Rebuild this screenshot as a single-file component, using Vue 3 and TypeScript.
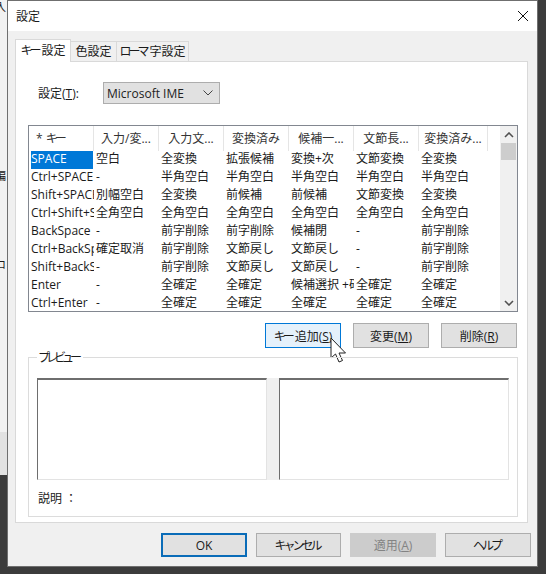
<script setup lang="ts">
const headers: string[] = ['入力/変...', '入力文...', '変換済み', '候補一...', '文節長...', '変換済み...']
const rows: string[][] = [
  ['SPACE', '空白', '全変換', '拡張候補', '変換+次', '文節変換', '全変換'],
  ['Ctrl+SPACE', '-', '半角空白', '半角空白', '半角空白', '半角空白', '半角空白'],
  ['Shift+SPACE', '別幅空白', '全変換', '前候補', '前候補', '文節変換', '全変換'],
  ['Ctrl+Shift+SPACE', '全角空白', '全角空白', '全角空白', '全角空白', '全角空白', '全角空白'],
  ['BackSpace', '-', '前字削除', '前字削除', '候補閉', '-', '前字削除'],
  ['Ctrl+BackSpace', '確定取消', '前字削除', '文節戻し', '文節戻し', '-', '前字削除'],
  ['Shift+BackSpace', '-', '前字削除', '文節戻し', '文節戻し', '-', '前字削除'],
  ['Enter', '-', '全確定', '全確定', '候補選択 +確定', '全確定', '全確定'],
  ['Ctrl+Enter', '-', '全確定', '全確定', '全確定', '全確定', '全確定'],
]
</script>

<template>
  <div class="desktop">
    <div class="behind">
      <span class="hint hint-a">入</span>
      <span class="hint hint-b">編</span>
      <span class="hint hint-c">ロ</span>
      <div class="behind-foot"></div>
    </div>
    <div class="window">
      <header class="titlebar">
        <span class="title">設定</span>
        <svg class="close" width="12" height="12" viewBox="0 0 12 12">
          <path d="M1 1 L11 11 M11 1 L1 11" stroke="#111" stroke-width="1" fill="none" />
        </svg>
      </header>
      <div class="body">
        <nav class="tabs">
          <span class="tab active"><span class="kana">キー</span>設定</span>
          <span class="tab">色設定</span>
          <span class="tab"><span class="kana">ローマ</span>字設定</span>
        </nav>
        <section class="pane">
          <div class="setting">
            <label class="setting-label">設定(<u>T</u>):</label>
            <div class="combo">
              <span>Microsoft IME</span>
              <svg width="10" height="6" viewBox="0 0 10 6">
                <path d="M0.5 0.5 L5 5 L9.5 0.5" stroke="#444" stroke-width="1" fill="none" />
              </svg>
            </div>
          </div>

          <div class="list">
            <div class="table">
              <div class="thead">
                <span class="th th-key">* <span class="kana">キー</span></span>
                <span v-for="(h, i) in headers" :key="i" class="th">{{ h }}</span>
              </div>
              <div v-for="(row, r) in rows" :key="r" class="tr">
                <span
                  v-for="(c, i) in row"
                  :key="i"
                  class="td"
                  :class="{ selected: r === 0 && i === 0 }"
                >{{ c }}</span>
              </div>
            </div>
            <div class="scrollbar">
              <svg width="10" height="6" viewBox="0 0 10 6">
                <path d="M1 5 L5 1 L9 5" stroke="#505050" stroke-width="1.6" fill="none" />
              </svg>
              <div class="thumb"></div>
              <div class="track"></div>
              <svg width="10" height="6" viewBox="0 0 10 6">
                <path d="M1 1 L5 5 L9 1" stroke="#505050" stroke-width="1.6" fill="none" />
              </svg>
            </div>
          </div>

          <div class="actions">
            <button class="btn action hover"><span class="kana">キー</span>追加(<u>S</u>)</button>
            <button class="btn action">変更(<u>M</u>)</button>
            <button class="btn action">削除(<u>R</u>)</button>
            <svg class="cursor" width="18" height="27" viewBox="0 0 18 27">
              <path
                d="M1 1 L1 21 L5.5 17 L9 25 L12.5 23.5 L9 16 L15.5 16 Z"
                fill="#fff"
                stroke="#222"
                stroke-width="1"
                stroke-linejoin="miter"
              />
            </svg>
          </div>

          <div class="group">
            <span class="legend"><span class="kana">プレビュー</span></span>
            <div class="previews">
              <div class="preview"></div>
              <div class="splitter"></div>
              <div class="preview"></div>
            </div>
            <div class="desc">説明 ：</div>
          </div>
        </section>
        <footer class="footer">
          <button class="btn foot default">OK</button>
          <button class="btn foot cancel"><span class="kana">キャンセル</span></button>
          <button class="btn foot disabled">適用(<u>A</u>)</button>
          <button class="btn foot"><span class="kana">ヘルプ</span></button>
        </footer>
      </div>
    </div>
  </div>
</template>

<style scoped>
.desktop {
  position: relative;
  width: 546px;
  height: 574px;
  overflow: hidden;
  background: #3c3c3c;
  font-family: "Open Sans", "Noto Sans CJK JP", sans-serif;
  font-size: 12px;
  color: #1a1a1a;
}
.kana {
  letter-spacing: -3px;
  margin-right: 3px;
}
.behind {
  position: absolute;
  left: 0;
  top: 0;
  width: 7px;
  height: 475px;
  background: #f2f2f2;
  overflow: hidden;
}
.behind-foot {
  position: absolute;
  left: 0;
  right: 0;
  top: 432px;
  bottom: 0;
  background: #e2e2e2;
}
.hint {
  position: absolute;
  left: -5px;
  font-size: 11px;
  line-height: 14px;
}
.hint-a { top: 0; }
.hint-b { top: 169px; }
.hint-c { top: 258px; }
.window {
  position: absolute;
  left: 7px;
  top: 0;
  width: 531px;
  height: 567px;
  box-sizing: border-box;
  border: 1px solid #6f6f6f;
  background: #f0f0f0;
  display: flex;
  flex-direction: column;
}
.titlebar {
  height: 30px;
  flex: none;
  background: #fff;
  display: flex;
  align-items: center;
  justify-content: space-between;
  padding: 0 8px 0 8px;
}
.title {
  font-size: 12px;
}
.body {
  flex: 1;
  display: flex;
  flex-direction: column;
  padding: 8px 0 0 7px;
}
.tabs {
  display: flex;
  align-items: flex-end;
  height: 23px;
  flex: none;
  position: relative;
  z-index: 1;
  margin-bottom: -1px;
}
.tab {
  box-sizing: border-box;
  height: 21px;
  line-height: 20px;
  text-align: center;
  border: 1px solid #d9d9d9;
  border-left: 0;
  background: #f0f0f0;
  white-space: nowrap;
}
.tab:nth-child(2) { width: 46px; }
.tab:nth-child(3) { width: 72px; }
.tab.active {
  width: 56px;
  height: 23px;
  line-height: 21px;
  background: #fff;
  border-left: 1px solid #d9d9d9;
  border-bottom: 0;
}
.pane {
  box-sizing: border-box;
  width: 513px;
  height: 462px;
  flex: none;
  background: #fff;
  border: 1px solid #d9d9d9;
  padding: 20px 10px 0 12px;
}
.setting {
  display: flex;
  align-items: center;
  height: 22px;
}
.setting-label {
  width: 75px;
  padding-left: 10px;
  box-sizing: border-box;
}
.combo {
  box-sizing: border-box;
  width: 117px;
  height: 22px;
  background: #e1e1e1;
  border: 1px solid #adadad;
  display: flex;
  align-items: center;
  justify-content: space-between;
  padding: 0 3px 0 3px;
  color: #222;
}
.combo svg { margin-right: 3px; }
.list {
  box-sizing: border-box;
  margin-top: 21px;
  height: 187px;
  width: 490px;
  border: 1px solid #828790;
  display: flex;
  justify-content: space-between;
  background: #fff;
}
.table {
  width: 459px;
  overflow: hidden;
}
.thead {
  display: grid;
  grid-template-columns: 65px repeat(5, 65px) 69px;
  height: 25px;
}
.th {
  box-sizing: border-box;
  line-height: 26px;
  text-align: center;
  color: #333;
  border-right: 1px solid #e5e5e5;
  white-space: nowrap;
  overflow: hidden;
}
.th-key {
  text-align: left;
  padding-left: 7px;
}
.tr {
  display: grid;
  grid-template-columns: 65px repeat(5, 65px) 69px;
  height: 18px;
}
.td {
  box-sizing: border-box;
  padding-left: 2px;
  line-height: 16px;
  white-space: nowrap;
  overflow: hidden;
}
.td.selected {
  background: #0078d7;
  color: #fff;
  margin-right: 1px;
  margin-left: 2px;
  padding-left: 0;
}
.scrollbar {
  width: 17px;
  flex: none;
  background: #f0f0f0;
  display: flex;
  flex-direction: column;
  align-items: center;
  padding: 6px 0 5px;
  box-sizing: border-box;
}
.thumb {
  width: 15px;
  height: 17px;
  background: #cdcdcd;
  margin-top: 5px;
}
.track { flex: 1; }
.actions {
  position: relative;
  display: flex;
  height: 25px;
  margin-top: 11px;
  padding-left: 237px;
  gap: 12px;
}
.cursor {
  position: absolute;
  left: 302px;
  top: 14px;
}
.btn {
  box-sizing: border-box;
  flex: none;
  margin: 0;
  padding: 0;
  font: inherit;
  color: #1a1a1a;
  background: #e1e1e1;
  border: 1px solid #adadad;
  white-space: nowrap;
}
.action {
  width: 76px;
  height: 25px;
}
.hover {
  background: #e5f1fb;
  border-color: #0078d7;
}
.group {
  position: relative;
  box-sizing: border-box;
  margin-top: 9px;
  width: 490px;
  height: 160px;
  border: 1px solid #dcdcdc;
  padding: 20px 8px 0;
}
.legend {
  position: absolute;
  left: 8px;
  top: -8px;
  padding: 0 1px;
  background: #fff;
  line-height: 16px;
}
.legend .kana {
  letter-spacing: -4px;
  margin-right: 4px;
}
.previews {
  display: flex;
  height: 102px;
}
.preview {
  box-sizing: border-box;
  width: 230px;
  background: #fff;
  border-top: 2px solid #6e6e6e;
  border-left: 1px solid #6e6e6e;
  border-right: 1px solid #e3e3e3;
  border-bottom: 1px solid #e3e3e3;
}
.splitter {
  width: 12px;
  background: #f0f0f0;
}
.desc {
  margin-top: 10px;
  line-height: 18px;
  padding-left: 1px;
}
.footer {
  display: flex;
  gap: 9px;
  margin-top: 10px;
  padding-left: 146px;
}
.foot {
  width: 86px;
  height: 24px;
}
.cancel {
  width: 85px;
}
.default {
  border: 2px solid #0a6cb8;
}
.disabled {
  background: #cccccc;
  border-color: #cccccc;
  color: #838383;
}
</style>

<style>
html, body {
  margin: 0;
  padding: 0;
  background: #3c3c3c;
}
</style>
